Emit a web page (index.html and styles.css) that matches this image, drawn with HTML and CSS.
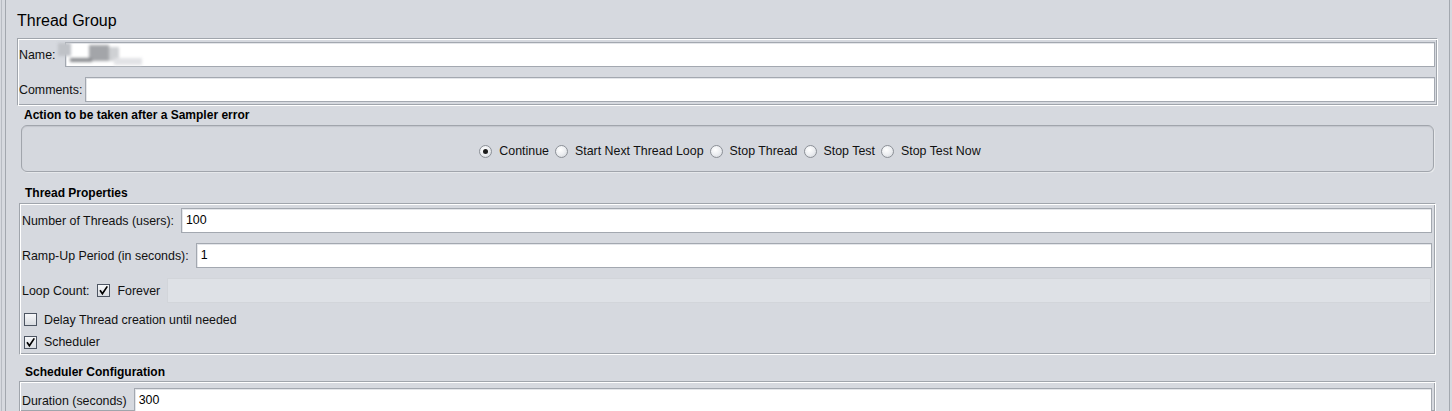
FILE: index.html
```html
<!DOCTYPE html>
<html>
<head>
<meta charset="utf-8">
<link rel="stylesheet" href="styles.css">
</head>
<body>
<div class="page">
  <div class="inner">
    <div class="content">
      <div class="title">Thread Group</div>

      <div class="etched namebox">
        <div class="row name-row">
          <span class="lbl">Name:</span>
          <div class="field redacted-host">
            <div class="redact">
              <span class="r1"></span><span class="r2"></span><span class="r3"></span><span class="r4"></span><span class="r5"></span>
            </div>
          </div>
        </div>
        <div class="row comments-row">
          <span class="lbl">Comments:</span>
          <div class="field"></div>
        </div>
      </div>

      <div class="section-label">Action to be taken after a Sampler error</div>
      <div class="rounded">
        <div class="radios">
          <label class="opt"><span class="radio on"></span><span>Continue</span></label>
          <label class="opt"><span class="radio"></span><span>Start Next Thread Loop</span></label>
          <label class="opt"><span class="radio"></span><span>Stop Thread</span></label>
          <label class="opt"><span class="radio"></span><span>Stop Test</span></label>
          <label class="opt"><span class="radio"></span><span>Stop Test Now</span></label>
        </div>
      </div>

      <div class="section-label sec2">Thread Properties</div>
      <div class="etched props">
        <div class="row frow">
          <span class="lbl">Number of Threads (users):</span>
          <div class="field">100</div>
        </div>
        <div class="row frow">
          <span class="lbl">Ramp-Up Period (in seconds):</span>
          <div class="field">1</div>
        </div>
        <div class="row frow loop">
          <span class="lbl">Loop Count:</span>
          <span class="check on"><svg viewBox="0 0 13 13" width="13" height="13"><path d="M3 6.3 L5.4 9.8 L10.3 2.4" fill="none" stroke="#000" stroke-width="1.7"/></svg></span>
          <span class="lbl">Forever</span>
          <div class="field disabled"></div>
        </div>
        <div class="row crow first">
          <span class="check"></span>
          <span class="lbl">Delay Thread creation until needed</span>
        </div>
        <div class="row crow last">
          <span class="check on"><svg viewBox="0 0 13 13" width="13" height="13"><path d="M3 6.3 L5.4 9.8 L10.3 2.4" fill="none" stroke="#000" stroke-width="1.7"/></svg></span>
          <span class="lbl">Scheduler</span>
        </div>
      </div>

      <div class="section-label sec3">Scheduler Configuration</div>
      <div class="etched sched">
        <div class="row frow">
          <span class="lbl">Duration (seconds)</span>
          <div class="field">300</div>
        </div>
      </div>
    </div>
  </div>
</div>
</body>
</html>
```
FILE: styles.css
```css
html, body {
  margin: 0;
  padding: 0;
  background: #d6d9df;
  height: 411px;
  overflow: hidden;
}
body {
  font-family: "Liberation Sans", Arial, sans-serif;
  font-size: 12.4px;
  color: #111;
}
.page {
  margin: 0 2px 0 1px;
  border-left: 1px solid #b8bcc3;
  border-right: 1px solid #a3a8af;
  height: 411px;
  overflow: hidden;
}
.inner {
  margin-left: 3px;
  border-left: 1px solid #a2a7ae;
  height: 411px;
}
.content {
  margin-left: 11px;
  width: 1421px;
  padding-top: 11px;
}
.title {
  font-size: 16px;
  line-height: 20px;
  height: 20px;
  margin-bottom: 7px;
  color: #000;
}
.etched {
  border: 1px solid;
  border-color: #a0a5ac #ffffff #ffffff #a0a5ac;
  box-shadow: inset 1px 1px 0 #ffffff, inset -1px -1px 0 #a0a5ac;
  padding: 1px;
}
.row {
  display: flex;
  align-items: center;
}
.field {
  flex: 1;
  height: 25px;
  box-sizing: border-box;
  background: #fff;
  border: 1px solid #a3a8b0;
  box-shadow: inset 1px 1px 0 #e4e6ea;
  padding: 0 4px;
  line-height: 23px;
  color: #000;
}
.field.disabled {
  background: #dee1e6;
  border-color: #d2d5da;
  box-shadow: none;
  margin-right: 1px;
}
.namebox {
  padding: 3px 2px 3px 1px;
}
.name-row { gap: 9px; }
.comments-row { gap: 3px; margin-top: 10px; }
.redacted-host { position: relative; }
.redact {
  position: absolute;
  left: -8px;
  top: 0;
  width: 90px;
  height: 26px;
  filter: blur(1.6px);
}
.redact span { position: absolute; display: block; }
.redact .r1 { left: 0; top: 0; width: 13px; height: 13px; background: #bfc2c7; }
.redact .r2 { left: 31px; top: 2px; width: 20px; height: 16px; background: #a3a5a9; }
.redact .r3 { left: 51px; top: 4px; width: 10px; height: 14px; background: #cfd1d4; }
.redact .r4 { left: 56px; top: 15px; width: 28px; height: 7px; background: #e2e3e6; }
.redact .r5 { left: 12px; top: 15px; width: 22px; height: 4px; background: #8a8c90; }

.section-label {
  font-weight: bold;
  font-size: 12px;
  line-height: 19px;
  height: 19px;
  padding-left: 7px;
  color: #000;
}
.rounded {
  margin: 0 4px;
  border: 1px solid #a1a5ac;
  border-radius: 6px;
  box-shadow: inset 0 1px 1px #c3c6cc, 1px 1px 0 #e6e8eb;
  padding: 18px 0 13px;
  background: #d5d8de;
}
.radios {
  display: flex;
  justify-content: center;
  align-items: center;
  gap: 6px;
  height: 14px;
  padding-left: 5px;
}
.opt {
  display: flex;
  align-items: center;
  gap: 7px;
}
.radio {
  width: 13px;
  height: 13px;
  box-sizing: border-box;
  border: 1px solid #8c9097;
  border-radius: 50%;
  background: radial-gradient(circle at 40% 35%, #ffffff 0%, #eceef1 50%, #cfd2d7 100%);
  position: relative;
}
.radio.on::after {
  content: "";
  position: absolute;
  left: 3px;
  top: 3px;
  width: 5px;
  height: 5px;
  border-radius: 50%;
  background: #1c1c1c;
}
.sec2 {
  margin-top: 11px;
  height: 20px;
  line-height: 20px;
  padding-left: 8px;
}
.props {
  margin: 0 2px;
  padding: 4px 3px 1px 1px;
}
.frow { gap: 7px; }
.frow + .frow { margin-top: 10px; }
.props .frow .lbl { padding-left: 1px; }
.check {
  width: 13px;
  height: 13px;
  box-sizing: border-box;
  border: 1px solid #4d5562;
  background: linear-gradient(#f7f8fa, #d9dce1);
  display: inline-block;
  flex: none;
}
.check svg { display: block; margin: -1px 0 0 -1px; }
.crow {
  gap: 7px;
  padding-left: 3px;
  height: 23px;
}
.crow.first { margin-top: 5px; }
.crow.last { height: 22px; }
.sec3 {
  margin-top: 8px;
  height: 18px;
  line-height: 18px;
  padding-left: 8px;
}
.sched {
  margin: 0 2px;
  padding: 6px 3px 0 1px;
  height: 30px;
  box-sizing: border-box;
  border-bottom: none;
  overflow: hidden;
}
.sched .frow .lbl { padding-left: 1px; }
```
